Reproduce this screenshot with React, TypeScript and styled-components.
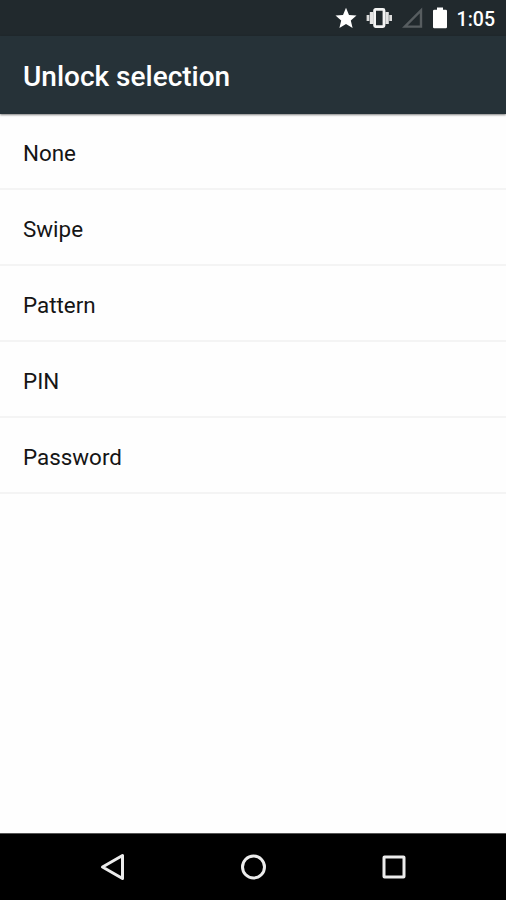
import React from "react";
import styled, { createGlobalStyle } from "styled-components";

const GlobalStyle = createGlobalStyle`
  * { box-sizing: border-box; }
  body {
    margin: 0;
    background: #fefefe;
    font-family: Roboto, "Liberation Sans", sans-serif;
  }
`;

const Screen = styled.div`
  display: flex;
  flex-direction: column;
  width: 100%;
  height: 900px;
  overflow: hidden;
  background: #fefefe;
`;

const StatusBar = styled.header`
  display: flex;
  align-items: center;
  justify-content: flex-end;
  flex: none;
  height: 36px;
  padding-right: 11px;
  background: #21292d;
`;

const StatusIcon = styled.svg<{ $gap: number }>`
  flex: none;
  display: block;
  margin-right: ${({ $gap }) => $gap}px;
`;

const Clock = styled.time`
  color: #fff;
  font-size: 19.5px;
  font-weight: 500;
  line-height: 36px;
  padding-top: 4px;
`;

const AppBar = styled.div`
  display: flex;
  align-items: center;
  flex: none;
  height: 78px;
  padding: 2px 23px 0;
  background: #263238;
  box-shadow: 0 1px 2px rgba(0, 0, 0, 0.5);
  z-index: 1;
`;

const Title = styled.h1`
  margin: 0;
  color: #fff;
  font-size: 28px;
  font-weight: 500;
`;

const OptionList = styled.ul`
  flex: 1;
  margin: 0;
  padding: 0;
  list-style: none;
`;

const Option = styled.li`
  display: flex;
  align-items: center;
  height: 76px;
  padding: 4px 23px 0;
  border-bottom: 2px solid #f4f4f4;
  color: #151515;
  font-size: 22.4px;
`;

const NavBar = styled.nav`
  display: flex;
  align-items: center;
  justify-content: center;
  gap: 112px;
  flex: none;
  height: 67px;
  border-top: 1px solid #555;
  background: #000;
`;

const NavIcon = styled.svg`
  display: block;
  fill: none;
  stroke: #ececec;
  stroke-width: 3;
  stroke-linejoin: round;
`;

const options = ["None", "Swipe", "Pattern", "PIN", "Password"];

export default function App() {
  return (
    <Screen>
      <GlobalStyle />
      <StatusBar>
        <StatusIcon $gap={9} width="22" height="22" viewBox="0 0 22 22">
          <path
            d="M11 .8 14 8l7.5.6-5.7 5 1.8 7.4L11 17l-6.6 4 1.8-7.4-5.7-5L8 8z"
            fill="#fff"
          />
        </StatusIcon>
        <StatusIcon $gap={9} width="27" height="22" viewBox="0 0 27 22">
          <rect x="8.600" y="2.400" width="9.400" height="17.200" rx="1" fill="none" stroke="#f4f4f4" strokeWidth="2.800" />
          <path d="M5.500 5v12M21.100 5v12" stroke="#e4e4e4" strokeWidth="3.400" />
          <path d="M2 8v6M24.600 8v6" stroke="#dcdcdc" strokeWidth="2.800" />
        </StatusIcon>
        <StatusIcon $gap={10} width="21" height="22" viewBox="0 0 21 22">
          <path d="M19 3.400v16.200H2.800z" fill="none" stroke="#575d60" strokeWidth="2.400" />
        </StatusIcon>
        <StatusIcon $gap={10} width="14" height="22" viewBox="0 0 14 22">
          <path d="M4 .5h6v2.300h2.800q1.200 0 1.200 1.200v16q0 1.200-1.200 1.200H1.200Q0 21.200 0 20V4q0-1.200 1.200-1.200H4z" fill="#fff" />
        </StatusIcon>
        <Clock>1:05</Clock>
      </StatusBar>
      <AppBar>
        <Title>Unlock selection</Title>
      </AppBar>
      <OptionList>
        {options.map((option) => (
          <Option key={option}>{option}</Option>
        ))}
      </OptionList>
      <NavBar>
        <NavIcon width="28" height="28" viewBox="0 0 28 28">
          <path d="M23.500 2.500v23L3.500 14z" />
        </NavIcon>
        <NavIcon width="28" height="28" viewBox="0 0 28 28">
          <circle cx="14.500" cy="14" r="11" />
        </NavIcon>
        <NavIcon width="28" height="28" viewBox="0 0 28 28">
          <rect x="5" y="4" width="20" height="20" rx=".5" />
        </NavIcon>
      </NavBar>
    </Screen>
  );
}
